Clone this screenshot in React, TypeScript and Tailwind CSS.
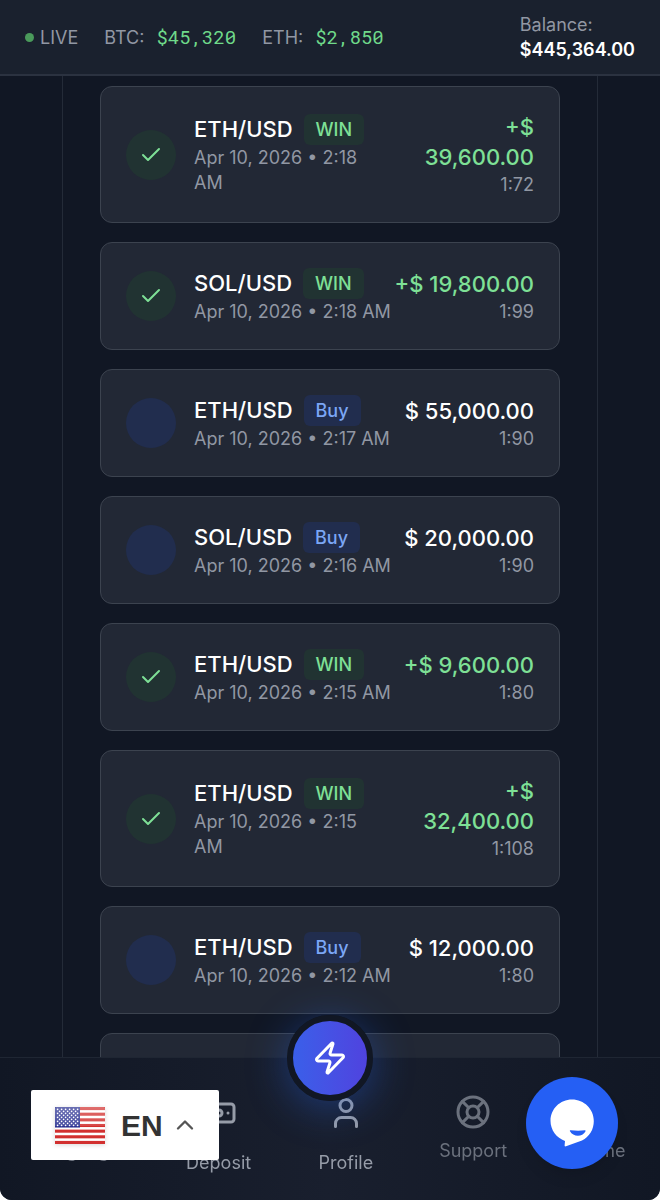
import React from "react";
import { Check, Zap, User, LifeBuoy, Banknote, ChevronUp, Globe, House } from "lucide-react";

type Trade = {
  pair: string;
  kind: "WIN" | "Buy";
  time: string;
  amount: string;
  ratio: string;
};

const trades: Trade[] = [
  { pair: "ETH/USD", kind: "WIN", time: "Apr 10, 2026 • 2:18 AM", amount: "+$ 39,600.00", ratio: "1:72" },
  { pair: "SOL/USD", kind: "WIN", time: "Apr 10, 2026 • 2:18 AM", amount: "+$ 19,800.00", ratio: "1:99" },
  { pair: "ETH/USD", kind: "Buy", time: "Apr 10, 2026 • 2:17 AM", amount: "$ 55,000.00", ratio: "1:90" },
  { pair: "SOL/USD", kind: "Buy", time: "Apr 10, 2026 • 2:16 AM", amount: "$ 20,000.00", ratio: "1:90" },
  { pair: "ETH/USD", kind: "WIN", time: "Apr 10, 2026 • 2:15 AM", amount: "+$ 9,600.00", ratio: "1:80" },
  { pair: "ETH/USD", kind: "WIN", time: "Apr 10, 2026 • 2:15 AM", amount: "+$ 32,400.00", ratio: "1:108" },
  { pair: "ETH/USD", kind: "Buy", time: "Apr 10, 2026 • 2:12 AM", amount: "$ 12,000.00", ratio: "1:80" },
];

function TradeCard({ trade }: { trade: Trade }) {
  const win = trade.kind === "WIN";
  return (
    <li className="flex items-center justify-between rounded-xl border border-[#3c434f] bg-[#222835] p-[25px]">
      <div className="flex items-center gap-[18px]">
        <span
          className={`flex size-[50px] shrink-0 items-center justify-center rounded-full ${win ? "bg-[#213332] text-[#7ee096]" : "bg-[#212d4e]"}`}
        >
          {win && <Check className="size-6" strokeWidth={2} />}
        </span>
        <div>
          <div className="flex items-center gap-[11px]">
            <span className="text-[22px] leading-[31px] font-medium text-white">{trade.pair}</span>
            <span
              className={`rounded-md px-3 text-[18px] leading-[31px] font-medium ${win ? "bg-[#213332] text-[#7ee096]" : "bg-[#212d4e] text-[#7ba6f5]"}`}
            >
              {trade.kind}
            </span>
          </div>
          <p className="text-[18px] leading-[25px] text-[#9197a3]">{trade.time}</p>
        </div>
      </div>
      <div className="text-right">
        <p className={`text-[22px] leading-[30px] font-medium ${win ? "text-[#7ee096]" : "text-white"}`}>{trade.amount}</p>
        <p className="text-[18px] leading-[25px] text-[#9197a3]">{trade.ratio}</p>
      </div>
    </li>
  );
}

function UsFlag() {
  const stars = Array.from({ length: 9 }, (_, r) => Array.from({ length: r % 2 ? 5 : 6 }, (_, c) => [r, c] as const)).flat();
  return (
    <svg viewBox="0 0 50 37" className="h-[37px] w-[50px] drop-shadow-sm" aria-hidden="true">
      <defs>
        <linearGradient id="shine" x1="0" y1="0" x2="0" y2="1">
          <stop offset="0" stopColor="#fff" stopOpacity="0.3" />
          <stop offset="0.5" stopColor="#fff" stopOpacity="0.12" />
          <stop offset="0.52" stopColor="#fff" stopOpacity="0" />
        </linearGradient>
      </defs>
      <rect width="50" height="37" rx="1" fill="#fff" />
      {[0, 1, 2, 3, 4, 5, 6].map((i) => (
        <rect key={i} y={i * 5.65} width="50" height="3.1" fill="#d2302f" />
      ))}
      <rect width="25" height="20.5" fill="#2a3192" />
      {stars.map(([r, c]) => (
        <circle key={`${r}-${c}`} cx={2.6 + c * 4 + (r % 2) * 2} cy={2.3 + r * 2} r="0.85" fill="#fff" />
      ))}
      <rect width="50" height="37" rx="1" fill="url(#shine)" />
    </svg>
  );
}

function ChatIcon() {
  return (
    <svg viewBox="0 0 44 48" className="h-12 w-11" aria-hidden="true">
      <path
        d="M22 0.5C10 0.5 0.5 10 0.5 21.8C0.5 31 6.5 39 15 42L14.6 46.6C14.6 47.4 15.2 47.6 16 47.3L32 41.5C39.5 37.6 43.8 30.5 43.8 22C43.8 10 34 0.5 22 0.5Z"
        fill="#fff"
      />
      <path d="M20.8 31.2C25.5 31.8 31 31.8 34.6 31.2C35.5 31.1 35.8 31.7 35.4 32.5C32.4 38.3 23 38 20 32.3C19.6 31.6 20 31.1 20.8 31.2Z" fill="#255ff4" />
    </svg>
  );
}

export default function App() {
  return (
    <div className="min-h-screen bg-white font-['Inter',sans-serif]">
      <div className="flex min-h-screen flex-col rounded-b-xl bg-[#111724]">
        <header className="sticky top-0 z-10 flex h-[76px] items-center justify-between border-b-2 border-[#2b3240] bg-[#1a212e] px-[25px] text-[18px] leading-[25px] text-[#9197a3]">
          <div className="flex items-center gap-[26px]">
            <span className="flex items-center gap-[6px]">
              <span className="size-[9px] rounded-full bg-[#4a9a5b]" />
              LIVE
            </span>
            <span className="flex items-baseline gap-3">
              BTC: <span className="font-['Roboto_Mono','DejaVu_Sans_Mono',monospace] text-[19px] text-[#6fd98a]">$45,320</span>
            </span>
            <span className="flex items-baseline gap-3">
              ETH: <span className="font-['Roboto_Mono','DejaVu_Sans_Mono',monospace] text-[19px] text-[#6fd98a]">$2,850</span>
            </span>
          </div>
          <div>
            <p>Balance:</p>
            <p className="font-semibold text-white">$445,364.00</p>
          </div>
        </header>

        <main className="mx-[62px] flex-1 border-x border-[#242b38] px-[37px] pt-[10px]">
          <ul className="flex flex-col gap-[19px]">
            {trades.map((t, i) => (
              <TradeCard key={i} trade={t} />
            ))}
            <li className="h-[108px] rounded-xl border border-[#3c434f] bg-[#222835]" />
          </ul>
        </main>
      </div>

      <nav className="fixed inset-x-0 bottom-0 z-20 h-[143px] rounded-b-xl border-t border-[#1f2633] bg-linear-to-r from-[#111724] via-[#191f2e] to-[#111724]">
        <div className="-mr-1 flex h-full text-[18px] leading-[25px] text-[#969ca8]">
          <a href="#language" className="flex w-[155px] flex-col items-center gap-2 pt-[36px] text-[#6b717d]">
            <Globe className="size-9" />
            Language
          </a>
          <a href="#deposit" className="flex flex-1 flex-col items-center gap-[19px] pt-[37px]">
            <Banknote className="size-9" />
            Deposit
          </a>
          <a href="#profile" className="flex flex-1 flex-col items-center gap-[19px] pt-[37px]">
            <User className="size-9" />
            Profile
          </a>
          <a href="#support" className="flex flex-1 flex-col items-center gap-2 pt-[36px] text-[#6b717d]">
            <LifeBuoy className="size-9" />
            Support
          </a>
          <a href="#home" className="flex flex-1 flex-col items-center gap-2 pt-[36px] text-[#6b717d]">
            <House className="size-9" />
            Home
          </a>
        </div>
        <button
          type="button"
          aria-label="Quick trade"
          className="absolute -top-[43px] left-1/2 flex size-[86px] -translate-x-1/2 items-center justify-center rounded-full border-6 border-[#111724] bg-linear-to-r from-[#3761ea] to-[#5040de] bg-origin-border text-white shadow-[0_6px_42px_rgba(37,99,235,0.4)]"
        >
          <Zap className="size-9" />
        </button>
      </nav>

      <button
        type="button"
        className="fixed bottom-10 left-[31px] z-30 flex h-[70px] w-[188px] items-center rounded-xs bg-white pl-6 font-['Liberation_Sans',sans-serif] text-[30px] font-bold text-[#333]"
      >
        <UsFlag />
        <span className="pl-4">EN</span>
        <ChevronUp className="ml-2 size-7 text-[#555]" strokeWidth={2} />
      </button>
      <button
        type="button"
        aria-label="Open chat"
        className="fixed right-[42px] bottom-[31px] z-30 flex size-[92px] items-center justify-center rounded-full bg-[#255ff4] shadow-lg"
      >
        <ChatIcon />
      </button>
    </div>
  );
}
